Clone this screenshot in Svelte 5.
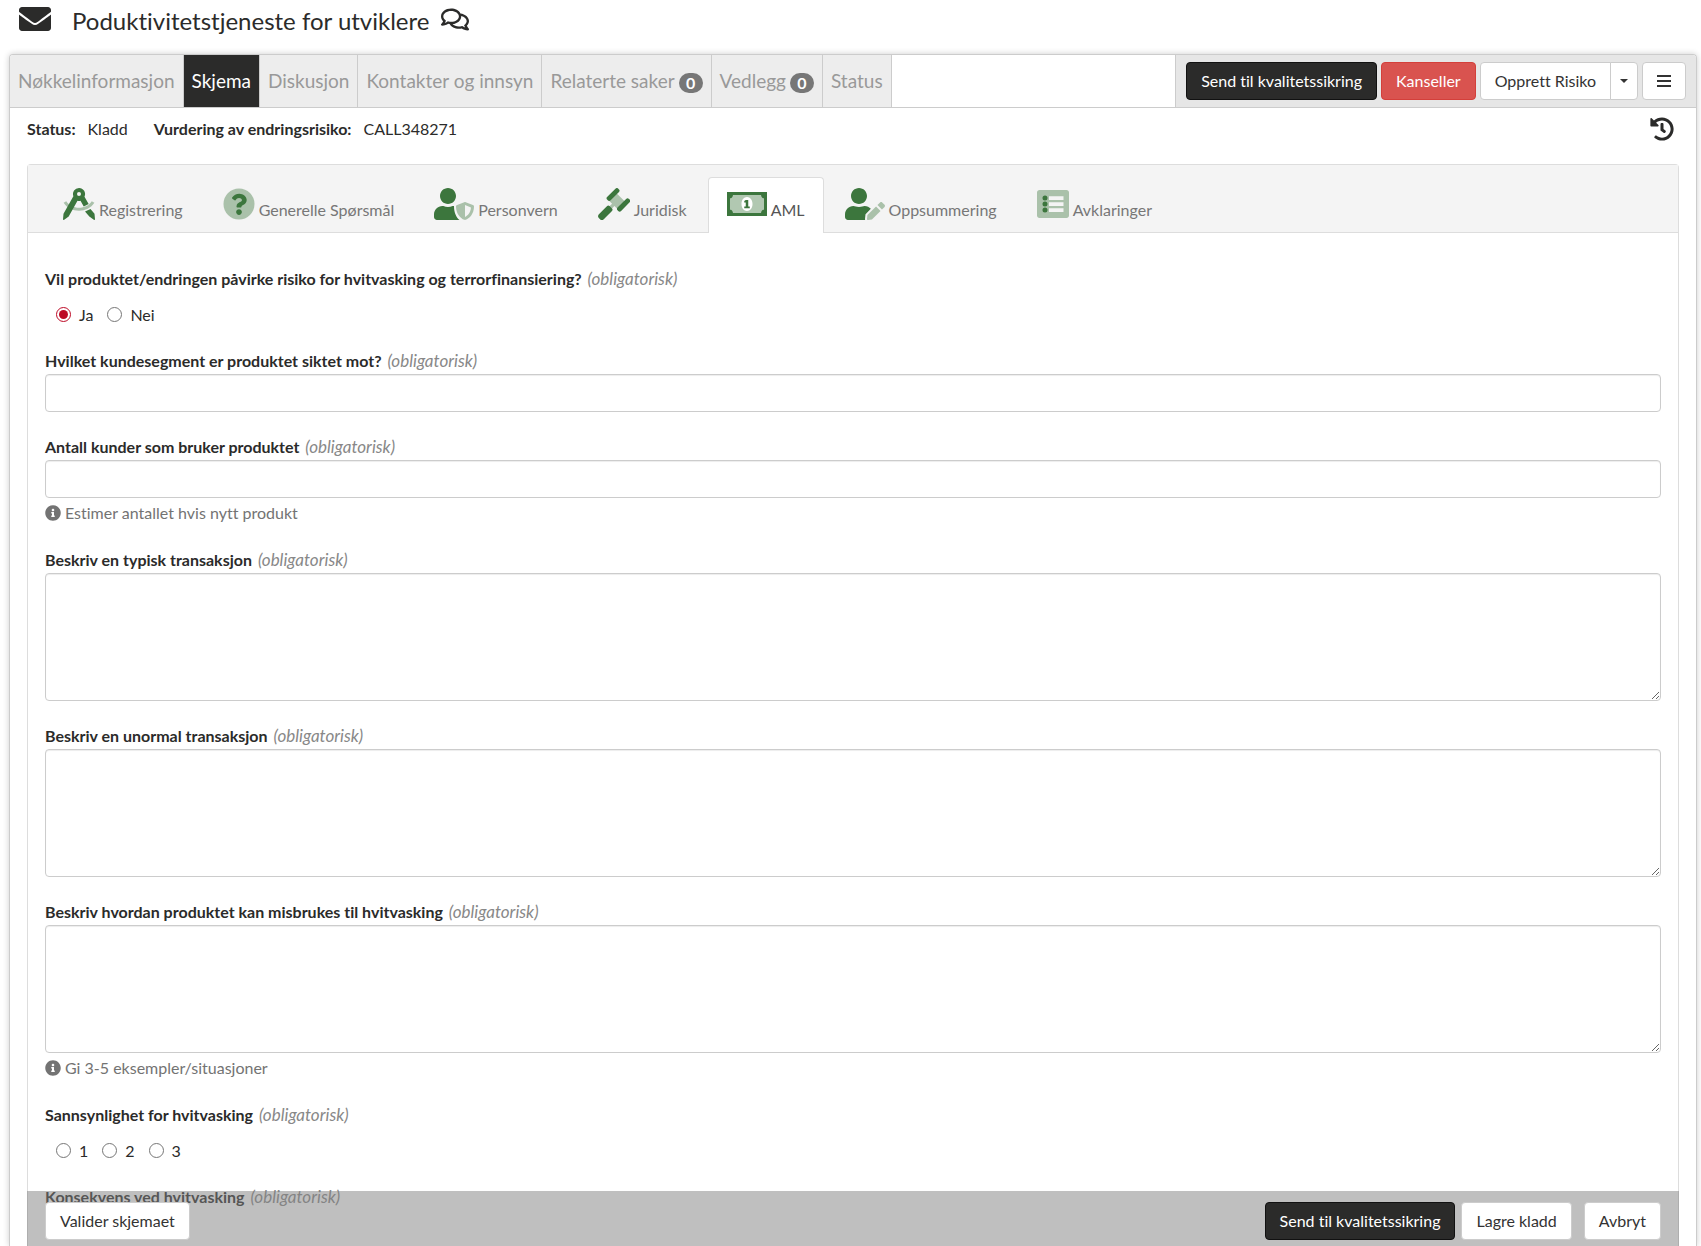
<script>
    let aml = 'Ja';
    let sannsynlighet = null;

    const mainTabs = [
        { name: 'Nøkkelinformasjon' },
        { name: 'Skjema', active: true },
        { name: 'Diskusjon' },
        { name: 'Kontakter og innsyn' },
        { name: 'Relaterte saker', count: 0 },
        { name: 'Vedlegg', count: 0 },
        { name: 'Status' }
    ];

    const person = 'M224 256c70.7 0 128-57.3 128-128S294.7 0 224 0 96 57.3 96 128s57.3 128 128 128z';

    // each icon has a dark layer and a soft, see-through layer
    const formTabs = [
        {
            name: 'Registrering',
            width: 512,
            soft: 'M10 236l42-26c45 68 120 104 204 104s159-36 204-104l42 26c-54 82-146 128-246 128S64 318 10 236z',
            dark: 'M256 0a96 96 0 0 0-90 130L8 410 0 498c-1 12 10 18 19 10l72-54 141-250a100 100 0 0 0 48 0l52 92 78-42-66-116A96 96 0 0 0 256 0zm0 64a32 32 0 1 1 0 64 32 32 0 0 1 0-64zM352 376l69 78 72 54c9 8 20 2 19-10l-8-88-64-76z'
        },
        {
            name: 'Generelle Spørsmål',
            width: 512,
            soft: 'M256 8a248 248 0 1 0 0 496 248 248 0 0 0 0-496z',
            dark: 'M262.655 90c-54.497 0-89.255 22.957-116.549 63.758-3.536 5.286-2.353 12.415 2.715 16.258l34.699 26.31c5.205 3.947 12.621 3.008 16.665-2.122 17.864-22.658 30.113-35.797 57.303-35.797 20.429 0 45.698 13.148 45.698 32.958 0 14.976-12.363 22.667-32.534 33.976C247.128 238.528 216 254.941 216 296v4c0 6.627 5.373 12 12 12h56c6.627 0 12-5.373 12-12v-1.333c0-28.462 83.186-29.647 83.186-106.667 0-58.002-60.165-102-116.531-102zM256 338c-25.365 0-46 20.635-46 46 0 25.364 20.635 46 46 46s46-20.636 46-46c0-25.365-20.635-46-46-46z'
        },
        {
            name: 'Personvern',
            width: 640,
            soft: 'M622.3 271.1l-115.2-45c-4.1-1.6-12.6-3.7-22.2 0l-115.2 45c-10.7 4.2-17.7 14-17.7 24.9 0 111.6 68.7 188.8 132.9 213.9 9.6 3.7 18 1.6 22.2 0C558.4 489.9 640 420.5 640 296c0-10.9-7-20.7-17.7-24.9zM496 462.4V273.3l95.5 37.3c-5.6 87.1-60.9 135.4-95.5 151.8z',
            dark: person + 'M134 288C60.2 288 0 348.2 0 422.4V464c0 26.5 21.5 48 48 48h360c-50-42-88-118-88-216v-8h-23c-22 10-47 16-73 16s-51-6-73-16z'
        },
        {
            name: 'Juridisk',
            width: 512,
            soft: 'M285 70l157 157-120 120-59-59-58 58-38-38 58-58-60-60z',
            dark: 'M145 145L279 11c15-15 32-15 46 0l11 11c12 12 12 26 0 40L202 196c-15 15-32 15-46 0l-11-11c-12-12-12-28 0-40zM312 312l138-138c15-15 32-15 46 0l10 10c12 12 12 30 0 44L370 368c-15 15-32 15-46 0l-12-12c-12-12-12-30 0-44zM14 420l132-132c12-12 26-12 38 0l40 40c12 12 12 26 0 38L92 498c-18 18-42 18-60 0l-18-18c-18-18-18-42 0-60z'
        },
        {
            name: 'AML',
            width: 640,
            active: true,
            soft: 'M96 112h448c0 34 22 56 48 56v176c-26 0-48 22-48 56H96c0-34-22-56-48-56V168c26 0 48-22 48-56zM320 144c-52 0-88 50-88 112s36 112 88 112 88-50 88-112-36-112-88-112z',
            dark: 'M0 64h640v384H0zM96 112c0 34-22 56-48 56v176c26 0 48 22 48 56h448c0-34 22-56 48-56V168c-26 0-48-22-48-56zM300 192h40v104h24v28h-88v-28h24v-64h-24v-24z'
        },
        {
            name: 'Oppsummering',
            width: 640,
            soft: 'M358.9 433.3l-6.8 61c-1.1 10.2 7.5 18.8 17.6 17.6l60.9-6.8 137.9-137.9-71.7-71.7-137.9 137.8zM633 268.9L595.1 231c-9.3-9.3-24.5-9.3-33.8 0l-41.9 41.9 71.8 71.7 41.8-41.8c9.3-9.4 9.3-24.5 0-33.9z',
            dark: person + 'M313.6 288c-28.7 0-42.5 16-89.6 16-47.1 0-60.8-16-89.6-16C60.2 288 0 348.2 0 422.4V464c0 26.5 21.5 48 48 48h274.9c-2.4-6.8-3.4-14-2.6-21.3l6.8-60.9 1.2-11.1 7.9-7.9 77.3-77.3c-24.5-27.7-60-45.5-99.9-45.5z'
        },
        {
            name: 'Avklaringer',
            width: 512,
            soft: 'M40 32h432c22 0 40 18 40 40v368c0 22-18 40-40 40H40c-22 0-40-18-40-40V72c0-22 18-40 40-40zM192 130v60h232v-60zM192 226v60h232v-60zM192 322v60h232v-60z',
            dark: 'M128 120a40 40 0 1 0 0 80 40 40 0 0 0 0-80zM128 216a40 40 0 1 0 0 80 40 40 0 0 0 0-80zM128 312a40 40 0 1 0 0 80 40 40 0 0 0 0-80z'
        }
    ];

    const questions = [
        { id: 'segment', label: 'Hvilket kundesegment er produktet siktet mot?', type: 'text' },
        { id: 'antall', label: 'Antall kunder som bruker produktet', type: 'text', help: 'Estimer antallet hvis nytt produkt' },
        { id: 'typisk', label: 'Beskriv en typisk transaksjon', type: 'area' },
        { id: 'unormal', label: 'Beskriv en unormal transaksjon', type: 'area' },
        { id: 'misbruk', label: 'Beskriv hvordan produktet kan misbrukes til hvitvasking', type: 'area', help: 'Gi 3-5 eksempler/situasjoner' }
    ];
</script>

<div class="page">
    <header class="title-bar">
        <svg class="envelope" viewBox="0 0 512 512"><path d="M502.3 190.8c3.9-3.1 9.7-.2 9.7 4.7V400c0 26.5-21.5 48-48 48H48c-26.5 0-48-21.5-48-48V195.6c0-5 5.7-7.8 9.7-4.7 22.4 17.4 52.1 39.5 154.1 113.6 21.1 15.4 56.7 47.8 92.2 47.6 35.7.3 72-32.8 92.3-47.6 102-74.1 131.6-96.3 154-113.7zM256 320c23.2.4 56.6-29.2 73.4-41.4 132.7-96.3 142.8-104.7 173.4-128.7 5.8-4.5 9.2-11.5 9.2-18.9v-19c0-26.5-21.5-48-48-48H48c-26.5 0-48 21.5-48 48v19c0 7.4 3.4 14.3 9.2 18.9 30.6 23.9 40.7 32.4 173.4 128.7 16.8 12.2 50.2 41.8 73.4 41.4z"/></svg>
        <h1>Poduktivitetstjeneste for utviklere</h1>
        <svg class="comments" viewBox="0 0 576 512"><path d="M532 386.2c27.5-27.1 44-61.1 44-98.2 0-80-76.5-146.1-176.2-157.9C368.3 72.5 294.3 32 208 32 93.1 32 0 103.6 0 192c0 37 16.5 71 44 98.2-15.3 30.7-37.3 54.5-37.7 54.9-6.3 6.7-8.1 16.5-4.4 25 3.6 8.5 12 14 21.2 14 53.5 0 96.7-20.2 125.2-38.8 9.2 2.1 18.7 3.7 28.4 4.9C208.1 407.6 281.8 448 368 448c20.8 0 40.8-2.4 59.8-6.8C456.3 459.7 499.4 480 553 480c9.2 0 17.5-5.5 21.2-14 3.6-8.5 1.9-18.3-4.4-25-.4-.3-22.5-24.1-37.8-54.8zm-392.8-92.3L122.1 305c-14.1 9.1-28.5 16.3-43.1 21.4 2.7-4.7 5.4-9.7 8-14.8l15.5-31.1L77.7 256C64.2 242.6 48 220.7 48 192c0-60.7 73.3-112 160-112s160 51.3 160 112-73.3 112-160 112c-16.5 0-33-1.9-49-5.6l-19.8-4.5zM498.3 352l-24.7 24.4 15.5 31.1c2.6 5.1 5.3 10.1 8 14.8-14.6-5.1-29-12.3-43.1-21.4l-17.1-11.1-19.9 4.6c-16 3.7-32.5 5.6-49 5.6-54 0-102.2-20.1-131.3-49.7C338 339.5 416 272.9 416 192c0-3.4-.4-6.7-.7-10C479.7 196.5 528 238.8 528 288c0 28.7-16.2 50.6-29.7 64z"/></svg>
    </header>

    <main class="panel">
        <div class="toolbar">
            <nav class="main-tabs">
                {#each mainTabs as tab (tab.name)}
                    <a href="#{tab.name}" class:active={tab.active}>
                        {tab.name}
                        {#if tab.count !== undefined}<span class="badge">{tab.count}</span>{/if}
                    </a>
                {/each}
            </nav>
            <div class="actions">
                <button class="btn dark">Send til kvalitetssikring</button>
                <button class="btn danger">Kanseller</button>
                <div class="btn-group">
                    <button class="btn">Opprett Risiko</button>
                    <button class="btn toggle" aria-label="Flere valg"><span class="caret"></span></button>
                </div>
                <button class="btn menu" aria-label="Meny">
                    <svg viewBox="0 0 14 14"><path d="M0 1h14v2H0zM0 6h14v2H0zM0 11h14v2H0z"/></svg>
                </button>
            </div>
        </div>

        <div class="status">
            <dl>
                <dt>Status:</dt>
                <dd>Kladd</dd>
                <dt>Vurdering av endringsrisiko:</dt>
                <dd>CALL348271</dd>
            </dl>
            <button class="history" aria-label="Historikk">
                <svg viewBox="0 0 512 512"><path d="M504 255.531c.253 136.64-111.18 248.372-247.82 248.468-59.015.042-113.223-20.53-155.822-54.911-11.077-8.94-11.905-25.541-1.839-35.607l11.267-11.267c8.609-8.609 22.353-9.551 31.891-1.984C173.062 425.135 212.781 440 256 440c101.705 0 184-82.311 184-184 0-101.705-82.311-184-184-184-48.814 0-93.149 18.969-126.068 49.932l50.754 50.754c10.08 10.08 2.941 27.314-11.313 27.314H24c-8.837 0-16-7.163-16-16V38.627c0-14.254 17.234-21.393 27.314-11.314l49.372 49.372C129.209 34.136 189.552 8 256 8c136.81 0 247.747 110.78 248 247.531zm-180.912 78.784l9.823-12.63c8.138-10.463 6.253-25.542-4.21-33.679L288 256.349V152c0-13.255-10.745-24-24-24h-16c-13.255 0-24 10.745-24 24v135.651l65.409 50.874c10.463 8.137 25.541 6.253 33.679-4.21z"/></svg>
            </button>
        </div>

        <section class="card">
            <nav class="form-tabs">
                {#each formTabs as tab (tab.name)}
                    <a href="#{tab.name}" class:active={tab.active}>
                        <svg class:wide={tab.width === 640} viewBox="0 0 {tab.width} 512" fill-rule="evenodd">
                            <path class="soft" d={tab.soft}/>
                            <path d={tab.dark}/>
                        </svg>
                        <span>{tab.name}</span>
                    </a>
                {/each}
            </nav>

            <form>
                <fieldset>
                    <legend>Vil produktet/endringen påvirke risiko for hvitvasking og terrorfinansiering? <em>(obligatorisk)</em></legend>
                    <div class="radios">
                        {#each ['Ja', 'Nei'] as option}
                            <label><input type="radio" name="aml" value={option} bind:group={aml}>{option}</label>
                        {/each}
                    </div>
                </fieldset>

                {#each questions as q (q.id)}
                    <div class="form-group">
                        <label class="question" for={q.id}>{q.label} <em>(obligatorisk)</em></label>
                        {#if q.type === 'area'}
                            <textarea id={q.id}></textarea>
                        {:else}
                            <input type="text" id={q.id}>
                        {/if}
                        {#if q.help}
                            <p class="help">
                                <svg viewBox="0 0 512 512"><path d="M256 8C119.043 8 8 119.083 8 256c0 136.997 111.043 248 248 248s248-111.003 248-248C504 119.083 392.957 8 256 8zm0 110c23.196 0 42 18.804 42 42s-18.804 42-42 42-42-18.804-42-42 18.804-42 42-42zm56 254c0 6.627-5.373 12-12 12h-88c-6.627 0-12-5.373-12-12v-24c0-6.627 5.373-12 12-12h12v-64h-12c-6.627 0-12-5.373-12-12v-24c0-6.627 5.373-12 12-12h64c6.627 0 12 5.373 12 12v100h12c6.627 0 12 5.373 12 12v24z"/></svg>
                                {q.help}
                            </p>
                        {/if}
                    </div>
                {/each}

                <fieldset>
                    <legend>Sannsynlighet for hvitvasking <em>(obligatorisk)</em></legend>
                    <div class="radios">
                        {#each ['1', '2', '3'] as option}
                            <label><input type="radio" name="sannsynlighet" value={option} bind:group={sannsynlighet}>{option}</label>
                        {/each}
                    </div>
                </fieldset>

                <fieldset>
                    <legend>Konsekvens ved hvitvasking <em>(obligatorisk)</em></legend>
                </fieldset>
            </form>

            <footer>
                <button class="btn">Valider skjemaet</button>
                <div class="footer-right">
                    <button class="btn dark">Send til kvalitetssikring</button>
                    <button class="btn">Lagre kladd</button>
                    <button class="btn cancel">Avbryt</button>
                </div>
            </footer>
        </section>
    </main>
</div>

<style>
    :global(body) {
        margin: 0;
        background: #fff;
    }

    .page {
        display: flex;
        flex-direction: column;
        height: 100vh;
        overflow: hidden;
        box-sizing: border-box;
        padding: 0 4px 0 9px;
        font-family: Lato, "Open Sans", sans-serif;
        font-size: 16px;
        font-variant-ligatures: none;
        line-height: 20px;
        color: #2b2b2a;
    }

    svg {
        fill: currentColor;
        flex: none;
    }

    .title-bar {
        display: flex;
        align-items: center;
        height: 38px;
        padding: 0 10px 16px;
    }

    .envelope {
        width: 32px;
        height: 32px;
        margin-right: 21px;
    }

    .comments {
        width: 28px;
        height: 25px;
        margin-left: 12px;
    }

    h1 {
        margin: 3px 0 0;
        font-size: 24px;
        font-weight: 400;
        line-height: 30px;
    }

    .panel {
        display: flex;
        flex-direction: column;
        flex: 1;
        min-height: 0;
        border: 1px solid #ccc;
        border-bottom: 0;
        border-radius: 4px 4px 0 0;
        box-shadow: 0 0 6px rgba(0, 0, 0, 0.2);
    }

    .toolbar {
        display: flex;
        justify-content: space-between;
        height: 52px;
        border-bottom: 1px solid #ccc;
    }

    .main-tabs {
        display: flex;
    }

    .main-tabs a {
        display: flex;
        align-items: center;
        gap: 4px;
        padding: 0 8px;
        border-right: 1px solid #ccc;
        background: #ededed;
        color: #999;
        font-size: 19px;
        text-decoration: none;
    }

    .main-tabs a:first-child {
        border-top-left-radius: 3px;
    }

    .main-tabs a.active {
        background: #2b2b2a;
        color: #fff;
    }

    .badge {
        min-width: 24px;
        height: 20px;
        margin-top: 3px;
        border-radius: 10px;
        background: #777;
        color: #fff;
        font-size: 16px;
        font-weight: 700;
        text-align: center;
    }

    .actions {
        display: flex;
        align-items: center;
        gap: 4px;
        padding: 0 10px;
        border-left: 1px solid #ccc;
        border-top-right-radius: 3px;
        background: #e6e6e6;
    }

    .btn {
        height: 38px;
        padding: 0 14px;
        border: 1px solid #ccc;
        border-radius: 4px;
        background: #fff;
        color: #333;
        font: inherit;
        cursor: pointer;
    }

    .btn.dark {
        border-color: #111;
        background: #2b2b2a;
        color: #fff;
    }

    .btn.danger {
        border-color: #d43f3a;
        background: #d9534f;
        color: #fff;
    }

    .btn-group {
        display: flex;
    }

    .btn-group .btn:first-child {
        border-radius: 4px 0 0 4px;
    }

    .btn-group .toggle {
        margin-left: -1px;
        padding: 0 9px;
        border-radius: 0 4px 4px 0;
    }

    .caret {
        display: block;
        border: 4px solid transparent;
        border-top-color: #333;
        border-bottom: 0;
    }

    .menu svg {
        display: block;
        width: 14px;
        height: 14px;
    }

    .status {
        display: flex;
        justify-content: space-between;
        align-items: center;
        height: 42px;
        margin-bottom: 14px;
        padding: 0 22px 0 17px;
    }

    dl {
        display: flex;
        gap: 12px;
        margin: 0;
    }

    dt {
        font-weight: 700;
    }

    dd {
        margin: 0 14px 0 0;
    }

    .history {
        padding: 0;
        border: 0;
        background: none;
        color: #2b2b2a;
        cursor: pointer;
    }

    .history svg {
        display: block;
        width: 24px;
        height: 24px;
    }

    .card {
        position: relative;
        flex: 1;
        min-height: 0;
        margin: 0 17px;
        border: 1px solid #ddd;
        border-bottom: 0;
        border-radius: 4px 4px 0 0;
    }

    .form-tabs {
        display: flex;
        gap: 2px;
        padding: 12px 16px 0;
        border-bottom: 1px solid #ddd;
        background: #f4f4f4;
    }

    .form-tabs a {
        display: flex;
        align-items: flex-end;
        gap: 4px;
        height: 42px;
        margin-bottom: -1px;
        padding: 0 18px 13px;
        border: 1px solid transparent;
        border-bottom: 0;
        border-radius: 4px 4px 0 0;
        color: #777;
        text-decoration: none;
    }

    .form-tabs a.active {
        border-color: #ddd;
        background: #fff;
        color: #555;
    }

    .form-tabs svg {
        width: 32px;
        height: 32px;
        color: #3c763d;
    }

    .form-tabs svg.wide {
        width: 40px;
    }

    .soft {
        opacity: 0.4;
    }

    form {
        padding: 36px 17px 0;
    }

    fieldset,
    .form-group {
        margin: 0 0 25px;
        padding: 0;
        border: 0;
    }

    legend,
    .question {
        display: block;
        margin: 0 0 3px;
        padding: 0;
        font-weight: 700;
    }

    em {
        margin-left: 2px;
        color: #888;
        font-size: 17px;
        font-weight: 400;
        line-height: 16px;
    }

    input[type="text"],
    textarea {
        display: block;
        box-sizing: border-box;
        width: 100%;
        height: 38px;
        padding: 6px 12px;
        border: 1px solid #ccc;
        border-radius: 4px;
        background: #fff;
        box-shadow: inset 0 1px 1px rgba(0, 0, 0, 0.075);
        font: inherit;
    }

    textarea {
        height: 128px;
        resize: vertical;
    }

    .radios {
        display: flex;
        gap: 14px;
        padding: 11px 11px 0;
    }

    .radios label {
        display: flex;
        align-items: center;
        gap: 8px;
        height: 23px;
    }

    input[type="radio"] {
        width: 15px;
        height: 15px;
        margin: 0;
        accent-color: #bd0a26;
    }

    .help {
        display: flex;
        align-items: center;
        gap: 4px;
        margin: 5px 0 0;
        padding-bottom: 2px;
        color: #737373;
    }

    .help svg {
        width: 16px;
        height: 16px;
    }

    footer {
        position: absolute;
        right: -1px;
        bottom: 0;
        left: -1px;
        display: flex;
        justify-content: space-between;
        padding: 11px 18px 6px;
        background: rgba(128, 128, 128, 0.5);
    }

    .footer-right {
        display: flex;
        gap: 6px;
    }

    .cancel {
        margin-left: 6px;
    }
</style>
